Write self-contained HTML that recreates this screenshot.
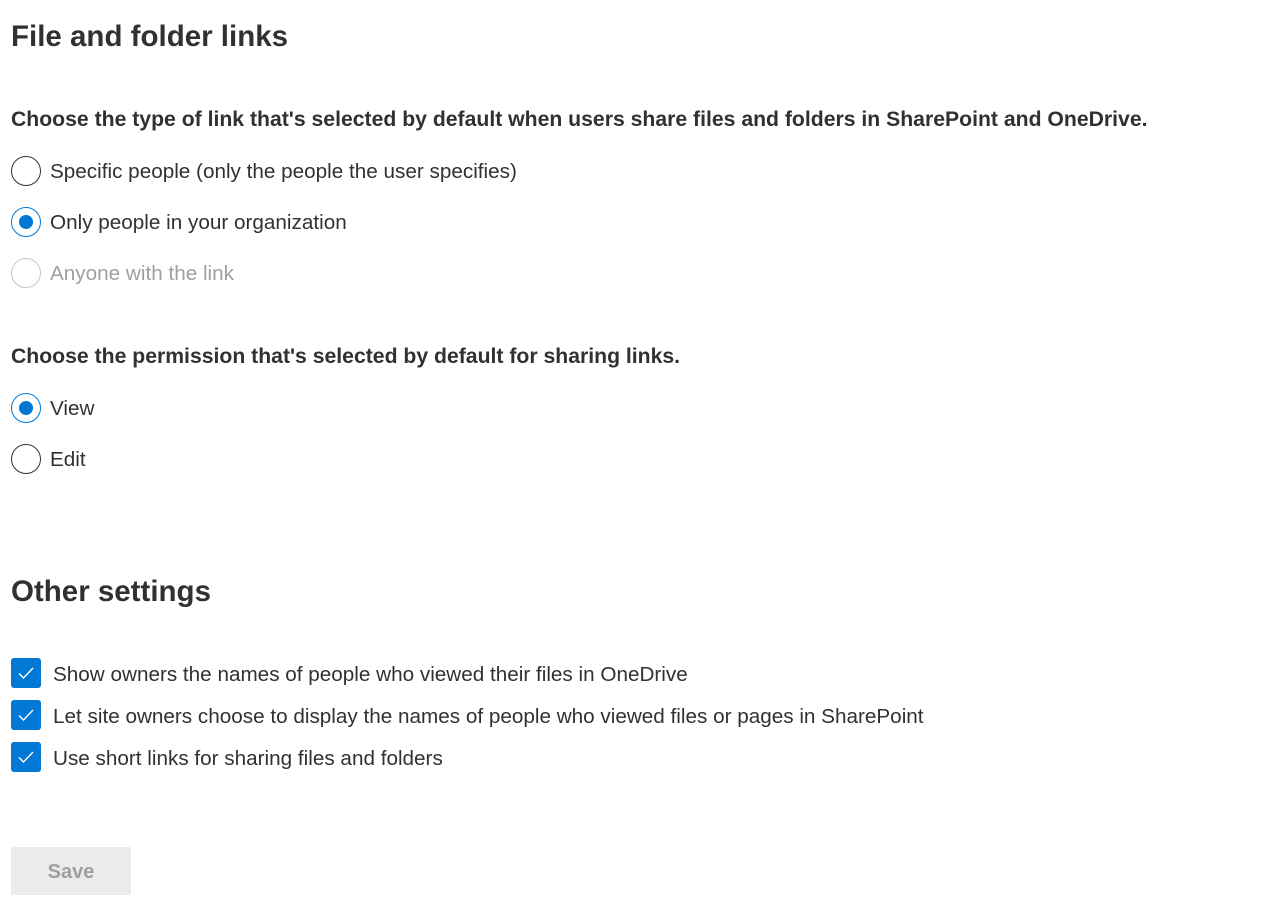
<!DOCTYPE html>
<html><head><style>
body{margin:0;background:#fff;font-family:"Liberation Sans",sans-serif;color:#323130;width:1285px;height:919px;position:relative;overflow:hidden}
.a{position:absolute;white-space:nowrap}
h1{position:absolute;margin:0;font-size:29.5px;font-weight:600;left:11px}
.b{font-size:21.2px;font-weight:bold;left:11px}
.t{font-size:20.7px;left:50px}
.r{position:absolute;left:11px;width:28px;height:28px;border:1px solid #323130;border-radius:50%;box-sizing:content-box}
.r.on{border-color:#0078d4}
.r.on::after{content:"";position:absolute;left:7px;top:7px;width:14px;height:14px;border-radius:50%;background:#0078d4}
.r.dis{border-color:#c8c6c4}
.c{position:absolute;left:11px;width:30px;height:30px;background:#0078d4;border-radius:3px}
.c svg{position:absolute;left:7px;top:8px}
.ct{font-size:20.7px;left:53px}
</style></head><body>
<h1 style="top:20px">File and folder links</h1>
<div class="a b" style="top:108px">Choose the type of link that's selected by default when users share files and folders in SharePoint and OneDrive.</div>
<div class="r" style="top:156px"></div><div class="a t" style="top:160px">Specific people (only the people the user specifies)</div>
<div class="r on" style="top:207px"></div><div class="a t" style="top:211px">Only people in your organization</div>
<div class="r dis" style="top:258px"></div><div class="a t" style="top:262px;color:#a19f9d">Anyone with the link</div>
<div class="a b" style="top:345px">Choose the permission that's selected by default for sharing links.</div>
<div class="r on" style="top:393px"></div><div class="a t" style="top:397px">View</div>
<div class="r" style="top:444px"></div><div class="a t" style="top:448px">Edit</div>
<h1 style="top:575px">Other settings</h1>
<div class="c" style="top:658px"><svg width="16" height="14" viewBox="0 0 16 14"><path d="M1 7.5l4.5 4.5L15 2" fill="none" stroke="#fff" stroke-width="1.4"/></svg></div>
<div class="a ct" style="top:663px">Show owners the names of people who viewed their files in OneDrive</div>
<div class="c" style="top:700px"><svg width="16" height="14" viewBox="0 0 16 14"><path d="M1 7.5l4.5 4.5L15 2" fill="none" stroke="#fff" stroke-width="1.4"/></svg></div>
<div class="a ct" style="top:705px">Let site owners choose to display the names of people who viewed files or pages in SharePoint</div>
<div class="c" style="top:742px"><svg width="16" height="14" viewBox="0 0 16 14"><path d="M1 7.5l4.5 4.5L15 2" fill="none" stroke="#fff" stroke-width="1.4"/></svg></div>
<div class="a ct" style="top:747px">Use short links for sharing files and folders</div>
<div class="a" style="left:11px;top:847px;width:120px;height:48px;background:#edebe9;border-radius:2px;color:#a19f9d;font-size:20px;font-weight:bold;text-align:center;line-height:50px">Save</div>
</body></html>
